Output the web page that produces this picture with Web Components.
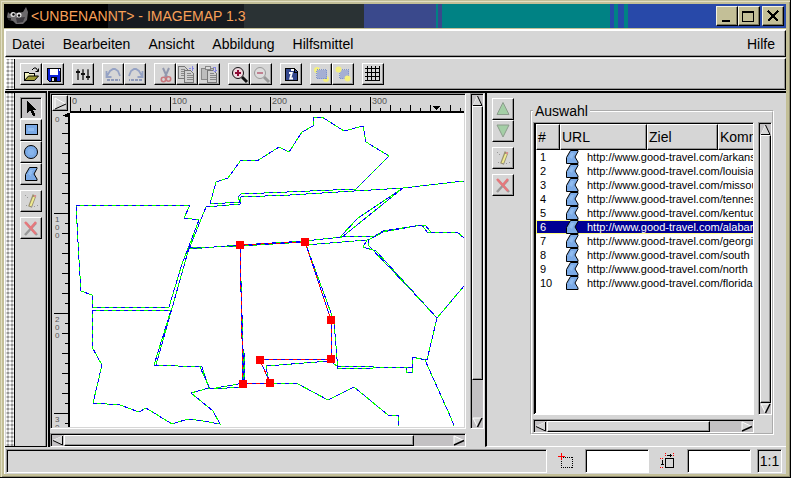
<!DOCTYPE html>
<html lang="de">
<head>
<meta charset="utf-8">
<title>&lt;Unbenannt&gt; - ImageMap 1.3</title>
<style>
:root{--bg:#d6d6d6;--lo:#969696;--hi:#fff;--trough:#c3c1c3;--tan:#c3bf97}
html,body{margin:0;height:100%}
body{font:14px/16px "Liberation Sans",Arial,sans-serif;color:#000;overflow:hidden}
</style>
</head>
<body>
<im-window>
  <im-titlebar slot="title">&lt;UNBENANNT&gt; - IMAGEMAP 1.3</im-titlebar>
  <im-menubar slot="menu"></im-menubar>
  <im-toolbar slot="tools"></im-toolbar>
  <im-toolbox slot="left"></im-toolbox>
  <im-editor slot="center"></im-editor>
  <im-selection slot="right"></im-selection>
  <im-statusbar slot="status"></im-statusbar>
</im-window>

<script>
const S = (body, size = 22) => `<svg width="${size}" height="${size}" viewBox="0 0 ${size} ${size}" shape-rendering="crispEdges" fill="none" aria-hidden="true">${body}</svg>`;
const POLY = '<path d="M4.500 17.500v-6l4-7h7.500v1l-3 5.500 3 5v1.500z" fill="#7baae6" stroke="#000" shape-rendering="auto"/><path d="M7 11l2-4h3l-2 6z" fill="#90bcf0"/>';
const UNDO = '<path d="M3.500 7v6h5M4 12l3-5 3-2h2l3 2 2 5" stroke="#95a2c4" stroke-width="1.800" shape-rendering="auto"/><path d="M4 16h13" stroke="#8d98b8" stroke-width="2" stroke-dasharray="3 1"/>';
const PAGE = (x, y) => `<path d="M${x} ${y}h6l3 3v9h-9z" fill="#d0d0d0" stroke="#777"/><path d="M${x+2} ${y+3}h4M${x+2} ${y+5}h6M${x+2} ${y+7}h6M${x+2} ${y+9}h6" stroke="#888"/>`;
const ZOOM = c => `<path d="M13 13l5 5" stroke="${c[0]}" stroke-width="3" shape-rendering="auto"/><circle cx="9" cy="9" r="5.500" fill="${c[1]}" stroke="${c[0]}" shape-rendering="auto"/>`;
const ICONS = {
  open: S('<path d="M3.500 16.500v-8h4l1 1h5v3" fill="#f4f4c0" stroke="#000"/><path d="M3.500 16.500l4-4.500h10l-4 4.500z" fill="#9c9a32" stroke="#000" shape-rendering="auto"/><path d="M11 6l2-2h2l2 3M14.500 7.500h3v-3" stroke="#000" shape-rendering="auto"/>'),
  save: S('<path d="M4.500 4.500h13v13h-11l-2-2z" fill="#0c20d8" stroke="#000"/><path d="M7 5h8v6H7z" fill="#fff"/><path d="M8 13h6v4H8z" fill="#000"/><path d="M9 14h2v3H9z" fill="#ddd"/><path d="M16 5h1v2h-1z" fill="#fff"/>'),
  prefs: S('<path d="M5 6v10M10 6v10M15 6v10" stroke="#555" stroke-width="2"/><path d="M3 8h4M8 10h4M13 13h4" stroke="#111" stroke-width="2"/><path d="M4 5.500h2M9 5.500h2M14 5.500h2" stroke="#777"/>'),
  undo: S(UNDO),
  redo: S(`<g transform="matrix(-1 0 0 1 21 0)">${UNDO}</g>`),
  cut: S('<path d="M8 4l4 9M14 4l-4 9" stroke="#9298ae" stroke-width="2" shape-rendering="auto"/><circle cx="8.500" cy="15.500" r="2.200" stroke="#c8787e" stroke-width="1.600" shape-rendering="auto"/><circle cx="13.500" cy="15" r="2.200" stroke="#c8787e" stroke-width="1.600" shape-rendering="auto"/>'),
  copy: S(PAGE(1.5,2.5)+PAGE(7.5,6.5)+'<path d="M12 4.500h6M15.500 2v6" stroke="#8888e8" stroke-dasharray="2 1"/>'),
  paste: S('<path d="M2.500 4.500h12v11h-12z" fill="#bdbdbd" stroke="#888"/><path d="M6 2h5v3H6z" fill="#ddd" stroke="#888"/>'+PAGE(8.5,6.5)+'<path d="M14 3h2v4M14 6l2 2 2-2" stroke="#8888e8"/>'),
  zin: S(ZOOM(['#111','#f0d8e0'])+'<path d="M6 9h6M9 6v6" stroke="#8e0a34" stroke-width="2"/>'),
  zout: S(ZOOM(['#999','#ddd'])+'<path d="M6 9h6" stroke="#c08090" stroke-width="2"/>'),
  info: S('<path d="M4.500 16.500v-12h9l3 3v9z" fill="#34488e" stroke="#000" stroke-width="1"/><path d="M13 4v4h4" stroke="#000"/><path d="M10 5h3v2h-3zM8 8h4l-1.500 5.500h1.500v2H8l1.500-5.500H8z" fill="#fff" shape-rendering="auto"/>'),
  front: S('<circle cx="6" cy="6" r="3" fill="#f5f07c" shape-rendering="auto"/><circle cx="15" cy="15" r="3" fill="#f5f07c" shape-rendering="auto"/><path d="M5.500 5.500h10v9h-10z" fill="#a5afd4" stroke="#7d94cc" stroke-dasharray="1 1"/>'),
  back: S('<path d="M6.500 5.500h9v9h-9z" fill="#a5afd4" stroke="#7d94cc" stroke-dasharray="1 1"/><circle cx="5.500" cy="5.500" r="3" fill="#f5f07c" shape-rendering="auto"/><circle cx="14.500" cy="14.500" r="3" fill="#f5f07c" shape-rendering="auto"/>'),
  grid: S('<path d="M4.500 2v15M8.500 2v15M12.500 2v15M16.500 2v15M2 4.500h15M2 8.500h15M2 12.500h15M2 16.500h15" stroke="#000"/>'),
  arrow: S('<path d="M6 3v12l3-3 3 6h2v-2l-2-4h4z" fill="#000"/>'),
  rect: S('<path d="M4.500 4.500h12v10h-12z" fill="#7baae6" stroke="#000"/><path d="M7 8h6v3H7z" fill="#90bcf0"/>'),
  circle: S('<circle cx="10" cy="10" r="6.500" fill="#7baae6" stroke="#000" shape-rendering="auto"/><circle cx="10" cy="10" r="3" fill="#86b4ec"/>'),
  poly: S(`<g transform="translate(0 -1)">${POLY}</g>`),
  edit: S('<path d="M13.500 4L9 16" stroke="#998f6c" stroke-width="4" shape-rendering="auto"/><path d="M13 6L9.500 15" stroke="#f0ec90" stroke-width="2" shape-rendering="auto"/><path d="M13 4h2v2h-2z" fill="#d89090"/><path d="M4 4l4 4M5 14h2M10 16l6-1v-3" stroke="#999" stroke-dasharray="1 2"/>'),
  del: S('<path d="M4 17L15 5" stroke="#999" stroke-width="2.500" shape-rendering="auto"/><path d="M5 5l11 12" stroke="#999" stroke-width="2.500" shape-rendering="auto"/><path d="M4 4l11 12M15 4l-6 7" stroke="#e6787c" stroke-width="2.500" shape-rendering="auto"/>'),
  up: S('<path d="M10 3.500l6 12H4z" fill="#a4cfa6" stroke="#8c9c8c" shape-rendering="auto"/>'),
  down: S('<path d="M10 16l6-12H4z" fill="#a4cfa6" stroke="#8c9c8c" shape-rendering="auto"/>'),
  row: `<svg width="15" height="14" viewBox="3 4 15 14" aria-hidden="true">${POLY}</svg>`,
  origin: S('<path d="M6.500 7v11M6 17.500h12M17.500 18V7M17 7.500H6" stroke="#000" stroke-dasharray="1 1"/><path d="M3 6.500h7M6.500 3v7" stroke="#f00"/>'),
  size: S('<path d="M8.500 8.500h8v9h-8z" stroke="#000"/><path d="M8.500 3v4M16.500 3v4M3 8.500h4M3 17.500h4" stroke="#f00" stroke-dasharray="1 1"/><path d="M10 5.500h5M13.500 4v3M5.500 10v5M4 14.500h3" stroke="#000"/>'),
};
const BEVEL = `
:host,*{box-sizing:border-box}
.up{background:var(--bg);border:1px solid;border-color:var(--hi) #000 #000 var(--hi);box-shadow:inset -1px -1px var(--lo)}
.in{border:1px solid;border-color:var(--lo) var(--hi) var(--hi) var(--lo);box-shadow:inset 1px 1px #000}
svg{display:block}
button{font:inherit;color:inherit;margin:0;padding:0}
`;
function define(name, css, html, setup) {
  customElements.define(name, class extends HTMLElement {
    connectedCallback() {
      if (this.shadowRoot) return;
      const root = this.attachShadow({mode: 'open'});
      root.innerHTML = `<style>${BEVEL}${css}</style>` + (typeof html === 'function' ? html(this) : html);
      if (setup) setup(root, this);
    }
  });
}

define('im-window', `
:host{display:flex;flex-direction:column;height:100vh;padding:4px 4px 3px;background:var(--tan);border:solid #000;border-width:0 1px 1px 0;box-shadow:inset 1px 1px var(--tan),inset 2px 2px #e2dfc4,inset -1px -1px #8f8b70}
main{display:flex;flex:1;min-height:0}
.body{display:flex;flex-direction:column;flex:1;min-height:0;background:var(--bg);margin-top:1px;border:solid var(--hi);border-width:1px 0 0 1px;gap:1px}
::slotted([slot=center]){flex:1;min-width:0}
`, `<slot name="title"></slot><div class="body"><slot name="menu"></slot><slot name="tools"></slot>
<main><slot name="left"></slot><slot name="center"></slot><slot name="right"></slot></main></div><slot name="status"></slot>`);

define('im-titlebar', `
:host{display:flex;align-items:center;height:24px;padding:0 2px 0 3px;color:#f8a058;font-size:14px;line-height:24px;
background:linear-gradient(90deg,#000 0 104px,#171b20 104px 240px,#2a3234 240px 360px,#3a498c 360px 432px,#008284 432px 434px,#3a498c 434px 438px,#008284 438px 606px,#2849a9 606px 610px,#008284 610px 614px,#2849a9 614px 620px,#008284 620px 624px,#2849a9 624px)}
h1{flex:1;margin:0 0 0 2px;font:inherit;white-space:nowrap}
.b{width:22px;height:20px;background:var(--tan);border-color:#f3f1e0 #000 #000 #f3f1e0;box-shadow:inset -1px -1px #7d7960}
.b+.b:last-child{margin-left:2px}
`, `<svg width="22" height="20" viewBox="0 0 22 20" aria-hidden="true"><path d="M1 6l2 2 3-2 4 1 6-1 3-5 2 5-1 8-4 4H9l-3-3-4-1-2-3z" fill="#6c6a6c"/><path d="M9 12l9-1-2 5-6 1z" fill="#3c3a3e"/><circle cx="6" cy="8.500" r="2.500" fill="#ddd"/><circle cx="12" cy="9" r="2.500" fill="#e8e8e8"/><circle cx="6.500" cy="8.500" r="1.200"/><circle cx="12" cy="9.500" r="1.200"/><path d="M1 12h3v2H1z" fill="#222"/></svg>
<h1><slot></slot></h1>
<button class="up b" aria-label="Minimieren">${S('<path d="M5 14h8" stroke="#000" stroke-width="2"/>',20)}</button>
<button class="up b" aria-label="Maximieren">${S('<path d="M3.500 4.500h11v10h-11z" stroke="#000"/><path d="M3 5h12" stroke="#000" stroke-width="2"/>',20)}</button>
<button class="up b" aria-label="Schließen">${S('<path d="M5 4l10 10M15 4L5 14" stroke="#000" stroke-width="2"/>',20)}</button>`);

define('im-menubar', `
:host{display:block}
nav{display:flex;gap:18px;height:27px;align-items:center;padding:0 10px 0 6px}
button{background:none;border:0}
button:last-child{margin-left:auto}
`, `<nav class="up">${['Datei','Bearbeiten','Ansicht','Abbildung','Hilfsmittel','Hilfe'].map(t=>`<button>${t}</button>`).join('')}</nav>`);

define('im-tool', `
:host{display:block}
button{display:block;width:22px;height:22px;overflow:hidden}
button.in{background:var(--trough)}
`, el => `<button class="${el.hasAttribute('pressed')?'in':'up'}" aria-label="${el.getAttribute('label')}">${ICONS[el.getAttribute('icon')]}</button>`);

define('im-grip', `
:host{display:block;flex:none;width:9px;border-right:1px solid #000;background:conic-gradient(#fff 25%,#d6d6d6 0 50%,#969696 0 75%,#d6d6d6 0) 1px 1px/4px 4px #d6d6d6}
`, '');

const tools = list => list.map(g=>`<div>${g.map(([i,l,p])=>`<im-tool icon="${i}" label="${l}" ${p||''}></im-tool>`).join('')}</div>`).join('');

define('im-toolbar', `
:host{display:block}
.bar{display:flex;height:32px}
.items{display:flex;gap:8px;padding:4px 5px}
.items div{display:flex}
`, `<div class="bar up"><im-grip></im-grip><div class="items">${tools([
 [['open','Öffnen'],['save','Speichern']],[['prefs','Einstellungen']],[['undo','Rückgängig'],['redo','Wiederholen']],
 [['cut','Ausschneiden'],['copy','Kopieren'],['paste','Einfügen']],[['zin','Vergrößern'],['zout','Verkleinern']],
 [['info','Information']],[['front','Nach vorne'],['back','Nach hinten']],[['grid','Gitter']]])}</div></div>`);

define('im-toolbox', `
:host{display:flex;flex:none;width:42px;padding-left:1px;background:var(--bg);border:solid;border-width:2px 1px 1px 0;border-color:#000;margin-right:1px}
.items{display:flex;flex-direction:column;gap:5px;padding:4px 3px 4px 5px;flex:1;border-right:1px solid var(--lo)}
`, `<im-grip></im-grip><div class="items">${tools([
 [['arrow','Auswählen','pressed'],['rect','Rechteck'],['circle','Kreis'],['poly','Polygon']],[['edit','Bearbeiten']],[['del','Löschen']]])}</div>`);

define('im-scrollbar', `
:host{display:flex}
.bar{display:flex;flex:1;min-width:0;min-height:0;background:var(--trough);padding:1px 0 0 1px}
.v{flex-direction:column}
.arrow{background:none;border:0;flex:none;width:12px;height:11px}
.v .arrow{width:11px;height:11px}
.track{flex:1;display:flex;min-width:0;min-height:0}
.v .track{flex-direction:column}
.thumb{flex:0 0 var(--size)}
`, el => {
  const v = el.hasAttribute('vertical');
  const a = v
    ? ['<path d="M1 11L5.500 1" stroke="#fff"/><path d="M5.500 1L10 10.500H1" stroke="#000"/>','<path d="M10 1H1L5.500 10" stroke="#fff"/><path d="M5.500 10L10 1" stroke="#000" stroke-width="1.500"/>']
    : ['<path d="M11 1L1 5.500" stroke="#fff"/><path d="M1 5.500L10.500 10V1" stroke="#000"/>','<path d="M1 10V1l10 4.500" stroke="#fff"/><path d="M11 5.500L1 10" stroke="#000" stroke-width="1.500"/>'];
  const svg = b => `<svg width="12" height="11" fill="#d6d6d6">${b}</svg>`;
  return `<div class="bar in ${v?'v':''}"><button class="arrow" aria-label="${v?'Nach oben':'Nach links'}">${svg(a[0])}</button><div class="track"><div class="thumb up" style="--size:${el.getAttribute('size')}"></div></div><button class="arrow" aria-label="${v?'Nach unten':'Nach rechts'}">${svg(a[1])}</button></div>`;
});

/* Ticks every 10 px, a number every 100 px, as far as the ruler is long. */
function drawRuler(svg, v, len) {
  let d = '', t = '';
  for (let i = 0; i < len; i += 10) {
    const n = i % 100 === 0 ? 14 : i % 20 === 0 ? 6 : 3;
    if (i || !v) d += v ? `M${16-n} ${i}.5h${n}` : `M${i}.5 ${16-n}v${n}`;
    if (i % 100 === 0) t += v
      ? [...String(i)].filter((c,k)=>i+1+8*k<len).map((c,k)=>`<text x="3" y="${i+9+8*k}">${c}</text>`).join('')
      : `<text x="${i+2}" y="9">${i}</text>`;
  }
  const mark = v ? '<path d="M10 3l6-3v4z"/>' : '<path d="M362 11h8l-4 4z"/>';
  const line = v ? `<path d="M17 0v${len}" stroke="#000" stroke-width="2"/>` : `<path d="M0 17h${len}" stroke="#000" stroke-width="2"/>`;
  svg.innerHTML = `<path d="${d}" stroke="#000"/>${line}${mark}${t}`;
}
define('im-ruler', `
:host{display:block;overflow:hidden;min-width:0;min-height:0;background:var(--bg);contain:size}
svg{width:100%;height:100%}
text{font:9px "Liberation Sans",sans-serif;fill:#555}
:host([vertical]) text{font-size:8px}
`, '<svg shape-rendering="crispEdges"></svg>', (root, el) => {
  const v = el.hasAttribute('vertical');
  new ResizeObserver(() => drawRuler(root.querySelector('svg'), v, v ? el.clientHeight : el.clientWidth)).observe(el);
});

/* Outlines of the map areas, in pixels of the edited image. */
const AREAS = [
 '6,92 63,92 120,92 114,105 129,107 112,151 99,194 22,194 22,182 11,178 9,147 6,92',
 '22,197 101,197 84,252 132,254 139,275 121,280 143,298 150,311 133,308 118,306 102,311 76,295 69,299 50,292 23,290 32,252 22,234 22,197',
 '140,91 146,69 158,65 171,47 187,48 209,34 219,39 232,19 243,13 243,4 252,4 274,18 293,13 296,29 319,43 286,76 171,81 168,84 170,89 140,91',
 '136,94 170,91 171,84 220,82 333,75 394,68',
 '333,75 272,124 235,128 170,132 119,136 136,94',
 '333,75 288,105 271,123 305,123 313,118 352,112 358,120 387,119 394,125',
 '119,135 170,133 174,270 140,276 130,254 86,252 119,135',
 '171,133 235,129 264,208 267,246 267,255 303,255',
 '174,240 174,274 140,276',
 '235,132 297,127 293,134 306,138 367,205 357,247 342,244 342,259 336,259 336,254',
 '342,254 303,254 303,253 267,253 260,248 196,253 199,270',
 '394,173 367,205 340,176 299,133 298,127 306,123 313,119 351,112 355,112 361,119 387,119 394,125',
 '199,270 228,271 258,287 284,274 318,302 328,302 328,313',
 '342,244 355,247 381,305 384,313'
];
const SEL = [[170,132],[235,129],[261,207],[261,246],[190,247],[200,270],[173,271]];

define('im-map', `
:host{display:block;background:#fff;overflow:hidden;min-width:0;min-height:0;contain:size}
svg{width:100%;height:100%}
.g{stroke:#0f0}.b{stroke:#00f;stroke-dasharray:4 4}.r{stroke:#f00}
`, () => {
  const pl = (c, p) => `<polyline class="${c}" points="${p}"/>`;
  const sel = [...SEL, SEL[0]].join(' ');
  return `<svg fill="none" shape-rendering="crispEdges" role="img" aria-label="Landkarte">${AREAS.map(p=>pl('g',p)+pl('b',p)).join('')}${pl('r',sel)}${pl('b',sel)}${SEL.map(([x,y])=>`<rect x="${x-4}" y="${y-4}" width="8" height="8" fill="#f00"/>`).join('')}</svg>`;
});

define('im-editor', `
:host{display:grid;grid-template:1fr 14px/1fr 14px;gap:4px;padding:0 1px 0 0;background:var(--bg);border:solid #000;border-width:2px 0 0 2px;min-height:0}
.frame{display:grid;grid-template:18px 1fr/18px 1fr;padding:1px;min-width:0;min-height:0}
.corner{width:16px;height:16px}
im-scrollbar{min-width:0;min-height:0}
`, `<div class="frame in"><button class="corner up" aria-label="Ursprung"><svg width="15" height="15" fill="none"><path d="M2 13V2l11 6" stroke="#fff"/><path d="M2 13l11-5" stroke="#000"/></svg></button>
<im-ruler></im-ruler><im-ruler vertical></im-ruler><im-map></im-map></div>
<im-scrollbar vertical size="88%"></im-scrollbar><im-scrollbar size="90%"></im-scrollbar>`);

define('im-object-list', `
:host{display:block;min-width:0;min-height:0;font-size:11px;line-height:13px}
.frame{height:100%;overflow:hidden;background:#fff;padding:1px 0 1px 1px}
.clip{height:100%;overflow:hidden;border-left:1px solid #000}
table{table-layout:fixed;width:272px;border-collapse:separate;border-spacing:0}
th{height:26px;padding:0 1px;font:14px/16px "Liberation Sans",sans-serif;text-align:left}
td{height:14px;padding:0 4px;white-space:nowrap;line-height:12px}
td span{display:flex;align-items:center;gap:7px;height:12px;margin-left:1px}
tr.sel td{background:#000094;color:#fff;border:solid #ffff80;border-width:1px 0}
tr.sel td:first-child{border-left-width:1px;padding-left:3px}
`, () => {
  const names = ['arkansas','louisiana','missouri','tennessee','kentucky','alabama','georgia','south','north','florida'];
  return `<div class="frame in"><div class="clip"><table><colgroup><col style="width:24px"><col style="width:87px"><col style="width:71px"><col style="width:90px"></colgroup>
<thead><tr><th class="up">#</th><th class="up">URL</th><th class="up">Ziel</th><th class="up">Komm</th></tr></thead>
<tbody>${names.map((n,i)=>`<tr class="${i===5?'sel':''}"><td>${i+1}</td><td colspan="3"><span>${ICONS.row}http://www.good-travel.com/${n}</span></td></tr>`).join('')}</tbody></table></div></div>`;
});

define('im-selection', `
:host{display:flex;gap:16px;width:301px;padding:5px 12px 11px 5px;border:solid;border-width:2px 0 1px 2px;border-color:#000 #fff #fff #000;min-height:0;background:var(--bg)}
.tools{display:flex;flex-direction:column;gap:5px}
fieldset{flex:1;display:grid;grid-template:1fr 14px/1fr 14px;gap:4px;min-width:0;min-height:0;margin:5px 0 0;padding:3px 0 0 1px;border:2px groove #fff}
legend{padding:0 2px;margin:0;height:16px}
im-scrollbar{min-width:0;min-height:0}
`, `<div class="tools">${tools([[['up','Nach oben'],['down','Nach unten']],[['edit','Bearbeiten']],[['del','Löschen']]])}</div>
<fieldset><legend>Auswahl</legend><im-object-list></im-object-list><im-scrollbar vertical size="100%"></im-scrollbar><im-scrollbar size="84%"></im-scrollbar></fieldset>`);

define('im-statusbar', `
:host{display:grid;grid-template-columns:1fr 38px 64px 38px 64px 31px;height:27px;padding:2px 4px 1px 1px;background:var(--bg);border-left:1px solid #fff}
label{display:flex;align-items:center;justify-content:center}
input{width:100%;min-width:0;height:24px;background:#fff;font:inherit;padding:0 4px;border-radius:0}
.zoom{margin-left:6px;display:flex;align-items:center;justify-content:center}
`, `<div class="in" role="status"></div><label for="xy" aria-label="Position">${ICONS.origin}</label><input id="xy" class="in"><label for="wh" aria-label="Größe">${ICONS.size}</label><input id="wh" class="in"><output class="in zoom">1:1</output>`);
</script>
</body>
</html>
